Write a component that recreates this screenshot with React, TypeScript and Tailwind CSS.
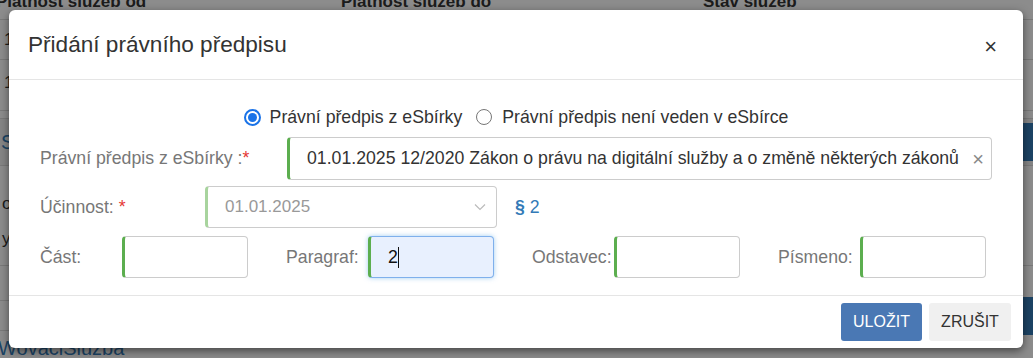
import React from "react";

function BgPage() {
  return (
    <div className="w-[1033px] h-[358px] bg-white text-[#333] text-[17px]" style={{ fontFamily: '"Liberation Sans", Arial, sans-serif' }}>
      <div className="h-[19px] overflow-hidden relative">
        <div className="flex font-bold leading-none -mt-[7px]">
          <div className="w-[345px] -ml-[4px]">Platnost služeb od</div>
          <div className="w-[362px]">Platnost služeb do</div>
          <div>Stav služeb</div>
        </div>
      </div>
      <div className="h-[40px] border-t border-[#ddd] flex items-center pl-[4px]">1</div>
      <div className="h-[51px] border-t border-[#ddd] flex items-start pt-[10px] pl-[4px]">1</div>
      <div className="h-[8px] border-t border-[#ddd]"></div>
      <div className="h-[47px] border-t border-[#ddd] bg-[#f2f2f2] flex items-center justify-between">
        <span className="text-[#337ab7] text-[20px] pl-[1px]">S</span>
        <span className="bg-[#337ab7] text-white h-[38px] w-[60px] flex items-center pl-[6px]">ID</span>
      </div>
      <div className="h-[100px] border-t border-[#ddd] pt-[20px] pl-[2px] leading-[35px]">
        <div>o</div>
        <div>y</div>
      </div>
      <div className="h-[35px] border-t border-[#ddd]"></div>
      <div className="h-[30px] border-t border-[#ddd] flex items-center justify-end">
        <span className="bg-[#337ab7] text-white h-[38px] w-[60px] flex items-center pl-[6px]">RI</span>
      </div>
      <div className="h-[28px] border-t border-[#ddd] flex items-end">
        <span className="text-[#337ab7] text-[20px] -ml-[2px] leading-none">WovaciSluzba</span>
      </div>
    </div>
  );
}

function Radio({ checked }: { checked: boolean }) {
  return checked ? (
    <span className="inline-flex shrink-0 items-center justify-center w-[17px] h-[17px] rounded-full border-[2px] border-[#1a73e8] bg-white">
      <span className="w-[9px] h-[9px] rounded-full bg-[#1a73e8]"></span>
    </span>
  ) : (
    <span className="inline-block shrink-0 w-[16px] h-[16px] rounded-full border border-[#767676] bg-white"></span>
  );
}

function SmallInput({ label, value, focused }: { label: string; value?: string; focused?: boolean }) {
  return (
    <div className="w-[246px] shrink-0 flex items-center">
      <div className="w-[82px] shrink-0 text-[#777]">{label}</div>
      <div
        className={
          focused
            ? "w-[126px] h-[42px] shrink-0 rounded-[4px] border border-[#7fb0ec] border-l-[3px] border-l-[#5cae4f] bg-[#e8f0fe] shadow-[0_0_5px_rgba(102,175,233,0.6)] flex items-center pl-[17px] text-[#111]"
            : "w-[126px] h-[42px] shrink-0 rounded-[4px] border border-[#ccc] border-l-[3px] border-l-[#5cae4f] bg-white flex items-center pl-[17px]"
        }
      >
        {value}
        {focused && <span className="inline-block w-[1px] h-[21px] bg-[#111]"></span>}
      </div>
    </div>
  );
}

export default function App() {
  return (
    <div className="relative w-[1033px] h-[358px] overflow-hidden" style={{ fontFamily: '"Liberation Sans", Arial, sans-serif' }}>
      <BgPage />
      <div className="absolute inset-0 bg-black/45"></div>
      <div className="absolute left-[9px] top-[10px] w-[1014px] h-[338px] bg-white rounded-[6px] shadow-[0_3px_9px_rgba(0,0,0,0.5)] flex flex-col text-[17.7px] text-[#333]">
        <div className="h-[70px] border-b border-[#e5e5e5] flex items-center justify-between pl-[19px] pr-[26px]">
          <div className="text-[22.6px] text-[#333]">Přidání právního předpisu</div>
          <div className="text-[22px] text-[#333] leading-none pt-[4px]">×</div>
        </div>
        <div className="flex-1 px-[31px] pt-[27px]">
          <div className="h-[20px] flex items-center justify-center">
            <label className="flex items-center gap-[9px]">
              <Radio checked />
              <span>Právní předpis z eSbírky</span>
            </label>
            <label className="flex items-center gap-[10px] ml-[14px]">
              <Radio checked={false} />
              <span>Právní předpis není veden v eSbírce</span>
            </label>
          </div>
          <div className="mt-[10px] flex items-center">
            <div className="w-[247px] shrink-0 text-[#777]">
              Právní předpis z eSbírky :<span className="text-[#e53935]">*</span>
            </div>
            <div className="flex-1 h-[43px] rounded-[4px] border border-[#ccc] border-l-[3px] border-l-[#5cae4f] flex items-center justify-between pl-[17px] pr-[7px] text-[#333] whitespace-nowrap overflow-hidden">
              <span>01.01.2025 12/2020 Zákon o právu na digitální služby a o změně některých zákonů</span>
              <span className="text-[#888] text-[20px] leading-none">×</span>
            </div>
          </div>
          <div className="mt-[6px] flex items-center">
            <div className="w-[165px] shrink-0 text-[#777]">
              Účinnost: <span className="text-[#e53935]">*</span>
            </div>
            <div className="w-[292px] h-[42px] rounded-[4px] border border-[#ccc] border-l-[3px] border-l-[#a8d49e] flex items-center justify-between pl-[17px] pr-[10px] text-[#999] text-[17px]">
              <span>01.01.2025</span>
              <svg width="12" height="8" viewBox="0 0 12 8" fill="none">
                <path d="M1 1.5L6 6.5L11 1.5" stroke="#bbb" strokeWidth="1.2" />
              </svg>
            </div>
            <div className="ml-[18px] text-[#337ab7]">
              <span className="font-bold">§</span> 2
            </div>
          </div>
          <div className="mt-[8px] flex items-center">
            <SmallInput label="Část:" />
            <SmallInput label="Paragraf:" value="2" focused />
            <SmallInput label="Odstavec:" />
            <SmallInput label="Písmeno:" />
          </div>
        </div>
        <div className="h-[53px] border-t border-[#e5e5e5] flex items-center justify-end gap-[7px] pr-[12px]">
          <button className="w-[81px] h-[38px] rounded-[3px] bg-[#4a78b4] text-white text-[16px]">ULOŽIT</button>
          <button className="w-[82px] h-[38px] rounded-[3px] bg-[#f0f0f0] text-[#333] text-[16px]">ZRUŠIT</button>
        </div>
      </div>
    </div>
  );
}
